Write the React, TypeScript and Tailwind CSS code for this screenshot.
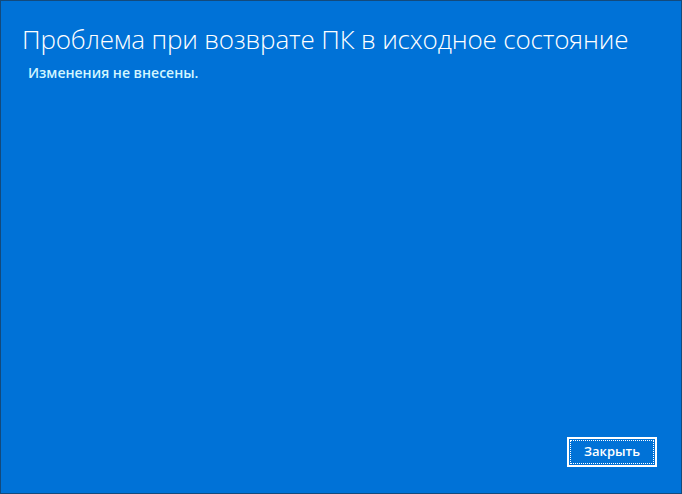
export default function App() {
	return (
		<div className="flex h-[494px] w-[682px] flex-col border border-[#134a7c] bg-[#0072d7] font-['Open_Sans',sans-serif] text-white">
			<div className="flex flex-col pl-[21px] pt-[20px]">
				<h1 className="text-[26px] leading-[36px] font-light tracking-[-0.15px]">
					Проблема при возврате ПК в исходное состояние
				</h1>
				<p className="mt-[7px] pl-[6px] text-[14px] leading-[18px] font-semibold text-[#d2f6ff]">
					Изменения не внесены.
				</p>
			</div>
			<div className="mt-auto flex justify-end pr-[24px] pb-[26px]">
				<button className="h-[30px] w-[90px] border-2 border-white p-[1px]">
					<span className="flex h-full w-full items-center justify-center border border-dotted border-white text-[13px] font-semibold">
						Закрыть
					</span>
				</button>
			</div>
		</div>
	)
}
